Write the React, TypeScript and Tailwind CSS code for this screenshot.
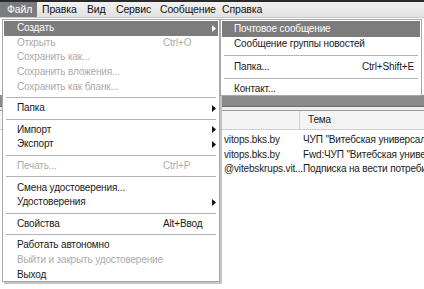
type Item =
  | { sep: true }
  | { label: string; shortcut?: string; disabled?: boolean; sub?: boolean; active?: boolean; sep?: false };

const FILE_MENU: Item[] = [
  { label: "Создать", sub: true, active: true },
  { label: "Открыть", shortcut: "Ctrl+O", disabled: true },
  { label: "Сохранить как...", disabled: true },
  { label: "Сохранить вложения...", disabled: true },
  { label: "Сохранить как бланк...", disabled: true },
  { sep: true },
  { label: "Папка", sub: true },
  { sep: true },
  { label: "Импорт", sub: true },
  { label: "Экспорт", sub: true },
  { sep: true },
  { label: "Печать...", shortcut: "Ctrl+P", disabled: true },
  { sep: true },
  { label: "Смена удостоверения..." },
  { label: "Удостоверения", sub: true },
  { sep: true },
  { label: "Свойства", shortcut: "Alt+Ввод" },
  { sep: true },
  { label: "Работать автономно" },
  { label: "Выйти и закрыть удостоверение", disabled: true },
  { label: "Выход" },
];

const NEW_MENU: Item[] = [
  { label: "Почтовое сообщение", active: true },
  { label: "Сообщение группы новостей" },
  { sep: true },
  { label: "Папка...", shortcut: "Ctrl+Shift+E" },
  { sep: true },
  { label: "Контакт..." },
];

const ROWS = [
  ["vitops.bks.by", "ЧУП \"Витебская универсальная\""],
  ["vitops.bks.by", "Fwd:ЧУП \"Витебская универсальная\""],
  ["@vitebskrups.vit...", "Подписка на вести потребителя"],
];

function Arrow({ white }: { white?: boolean }) {
  return (
    <svg width="4" height="7" viewBox="0 0 4 7" className="shrink-0">
      <path d="M0 0 L4 3.5 L0 7 Z" fill={white ? "#ffffff" : "#111111"} />
    </svg>
  );
}

function MenuList({ items, rowH, shortcutCol, padL }: { items: Item[]; rowH: string; shortcutCol: string; padL: string }) {
  return (
    <>
      {items.map((it, i) =>
        it.sep ? (
          <div key={i} className="h-[7px] flex items-center px-[2px]">
            <div className="h-px w-full bg-[#b4b4b4]" />
          </div>
        ) : (
          <div
            key={i}
            className={`${rowH} ${padL} flex items-center pr-[2px] ${
              it.active ? "bg-[#7c7c7c] text-white" : it.disabled ? "text-[#ababab]" : "text-[#1a1a1a]"
            }`}
          >
            <span className="flex-1 whitespace-nowrap">{it.label}</span>
            {it.shortcut && <span className={`${shortcutCol} whitespace-nowrap`}>{it.shortcut}</span>}
            {it.sub && <Arrow white={it.active} />}
          </div>
        )
      )}
    </>
  );
}

export default function App() {
  return (
    <div
      className="relative w-[424px] h-[289px] overflow-hidden bg-white text-[10px] leading-none tracking-[-0.15px]"
      style={{ fontFamily: '"Liberation Sans", Arial, sans-serif' }}
    >
      {/* ── Menu bar ───────────────────────────────────────────── */}
      <div className="h-[18px] border-t-2 border-[#2a2a2a] bg-gradient-to-b from-[#f2f2f2] to-[#e2e2e2] border-b border-b-[#c8c8c8] grid grid-cols-[37px_45px_29px_44px_62px_1fr] text-[#111] text-[10.5px] whitespace-nowrap">
        <div className="flex items-center bg-[#7c7c7c] text-white pl-[7px]">Файл</div>
        <div className="flex items-center pl-[5px]">Правка</div>
        <div className="flex items-center pl-[5px]">Вид</div>
        <div className="flex items-center pl-[5px]">Сервис</div>
        <div className="flex items-center pl-[5px]">Сообщение</div>
        <div className="flex items-center pl-[5px]">Справка</div>
      </div>

      {/* ── Window content behind the menus ──────────────────── */}
      <div className="pt-[77px]">
        <div className="h-[12px] bg-[#8a8a8a] border-b border-[#6e6e6e]" />
        <div className="h-[4px] bg-[#efefef] border-b border-[#9a9a9a]" />
        <div className="h-[19px] flex bg-[#f4f4f4] border-b border-[#cfcfcf]">
          <div className="w-[300px] shrink-0 border-r border-[#d0d0d0]" />
          <div className="pl-[8px] flex items-center text-[#222]">Тема</div>
        </div>
        <div className="pt-[3px]">
          {ROWS.map(([from, subj]) => (
            <div key={subj} className="h-[14.5px] flex items-center text-[#1a1a1a] whitespace-nowrap">
              <div className="w-[303px] shrink-0 pl-[224px] overflow-hidden">{from}</div>
              <div className="shrink-0">{subj}</div>
            </div>
          ))}
        </div>
      </div>

      {/* ── File menu ────────────────────────────────────────── */}
      <div className="absolute left-[2px] top-[19px] w-[218px] h-[263px] bg-white border border-[#a8a8a8] shadow-[2px_2px_0_#c4c4c4] p-[1px]">
        <MenuList items={FILE_MENU} rowH="h-[14.6px]" padL="pl-[13px]" shortcutCol="w-[53px]" />
      </div>

      {/* ── "Создать" submenu ────────────────────────────────── */}
      <div className="absolute left-[220px] top-[19px] w-[202px] h-[77px] bg-white border border-[#a8a8a8] p-[1px]">
        <MenuList items={NEW_MENU} rowH="h-[15.5px]" padL="pl-[12px]" shortcutCol="pr-[4px]" />
      </div>
    </div>
  );
}
